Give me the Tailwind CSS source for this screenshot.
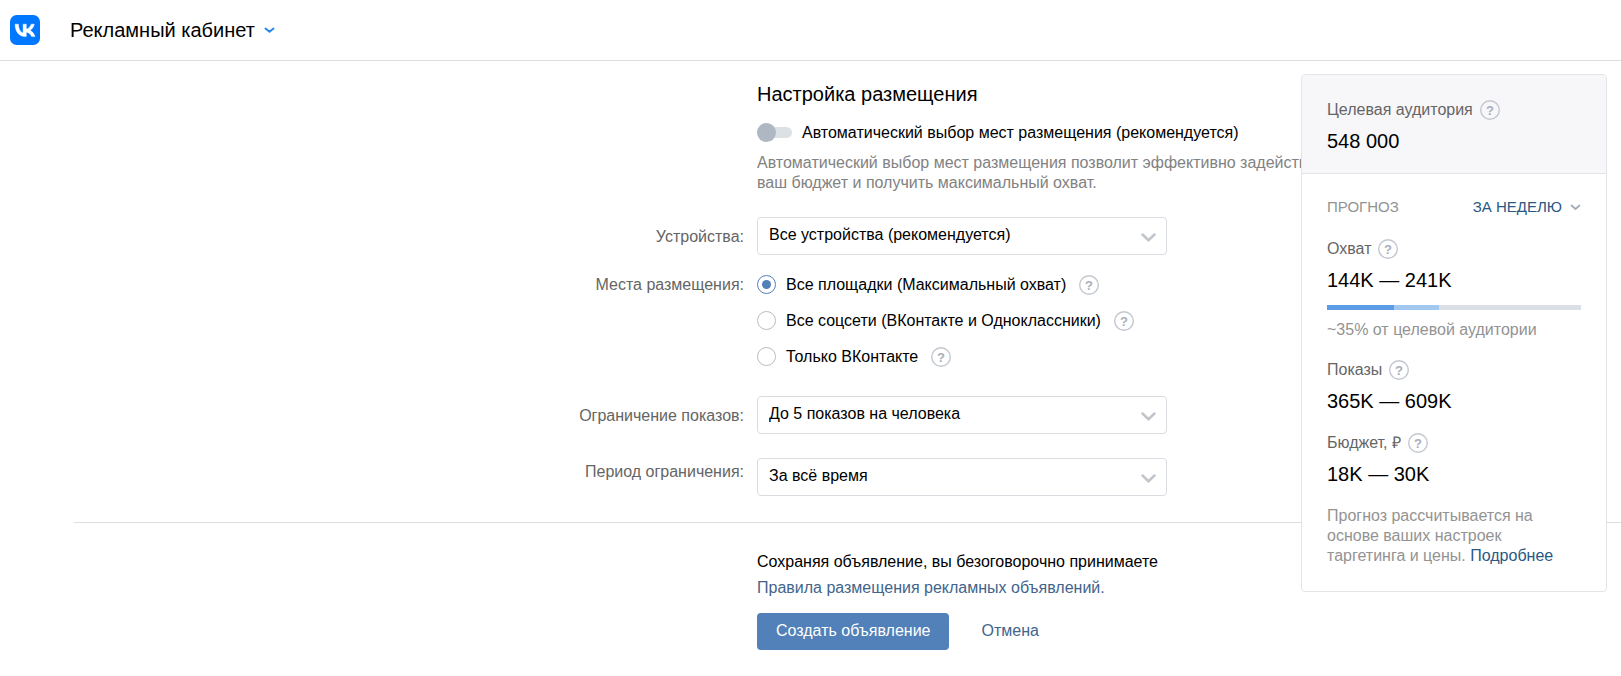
<!DOCTYPE html>
<html lang="ru">
<head>
<meta charset="utf-8">
<meta name="viewport" content="width=device-width, initial-scale=1">
<title>Рекламный кабинет</title>
<script src="https://cdn.jsdelivr.net/npm/@tailwindcss/browser@4"></script>
</head>
<body class="relative min-h-screen overflow-x-hidden bg-white font-['Liberation_Sans',Arial,sans-serif] text-[16px] leading-5 text-black">

<header class="flex h-[61px] items-center border-b border-[#dcdee0] pl-[10px]">
  <a href="#" aria-label="ВКонтакте" class="block size-[30px]">
    <svg class="size-full" viewBox="0 0 24 24" aria-hidden="true">
      <rect width="24" height="24" rx="5.4" fill="#07f"/>
      <path fill="#fff" stroke="#fff" stroke-width=".3" d="M12.77 17.29c-5.47 0-8.59-3.75-8.72-9.99h2.74c.09 4.58 2.11 6.52 3.71 6.92V7.3h2.58v3.95c1.58-.17 3.24-1.97 3.8-3.95h2.58c-.43 2.44-2.23 4.24-3.51 4.98 1.28.6 3.33 2.17 4.11 5.01h-2.84c-.61-1.9-2.13-3.37-4.14-3.57v3.57z"/>
    </svg>
  </a>
  <button type="button" class="ml-[30px] flex items-center gap-[9px] text-[20px] leading-6">
    Рекламный кабинет
    <svg class="h-[7px] w-[11px]" viewBox="0 0 11 7" fill="none" stroke="#2688eb" stroke-width="2" stroke-linecap="round" stroke-linejoin="round" aria-hidden="true"><path d="M1.500 1.500l4 3.200 4-3.200"/></svg>
  </button>
</header>

<form class="ml-[74px]">
  <div class="grid grid-cols-[minmax(0,670px)_minmax(0,1fr)] gap-x-[13px] pt-[21px] pb-[26px]">
    <section class="col-start-2">
      <h1 class="text-[20px] leading-6">Настройка размещения</h1>
      <label class="mt-[17px] flex items-start gap-[10px]">
        <input type="checkbox" role="switch" class="relative mt-1 h-[11px] w-[35px] appearance-none rounded-full bg-[#dce1e6] before:absolute before:-top-1 before:left-0 before:size-[19px] before:rounded-full before:bg-[#aeb7c2]">
        Автоматический выбор мест размещения (рекомендуется)
      </label>
      <p class="mt-[10px] whitespace-nowrap text-[#828282]">Автоматический выбор мест размещения позволит эффективно задействовать<br>ваш бюджет и получить максимальный охват.</p>
    </section>

    <label for="devices" class="mt-6 pt-[10px] text-right text-[#656565]">Устройства:</label>
    <div class="relative mt-6 max-w-[410px]">
      <select id="devices" class="block h-[38px] w-full appearance-none rounded-[4px] border border-[#d9dce0] bg-white pr-10 pb-[3px] pl-[11px]">
        <option>Все устройства (рекомендуется)</option>
      </select>
      <svg class="pointer-events-none absolute top-4 right-[11px] h-[9px] w-[15px]" viewBox="0 0 15 9" fill="none" stroke="#c1c4c8" stroke-width="2.500" stroke-linecap="round" aria-hidden="true"><path d="M1.500 1.500l6 5.700 6-5.700"/></svg>
    </div>

    <div id="places" class="mt-5 text-right text-[#656565]">Места размещения:</div>
    <div role="radiogroup" aria-labelledby="places" class="mt-5 flex flex-col gap-4">
      <div class="flex items-center gap-[13px]">
        <label class="flex items-start gap-[10px]">
          <input type="radio" name="place" checked class="grid size-[19px] appearance-none place-content-center rounded-full border border-[#b8bcc2] before:size-[9px] before:rounded-full checked:border-[#5181b8] checked:before:bg-[#5181b8]">
          Все площадки (Максимальный охват)
        </label>
        <button type="button" aria-label="Подсказка" class="size-5"><svg class="size-5" viewBox="0 0 20 20" aria-hidden="true"><circle cx="10" cy="10" r="9.300" fill="none" stroke="#c3c8d0" stroke-width="1.400"/><text x="10" y="14.500" text-anchor="middle" font-size="13" font-weight="700" fill="#a8aeb8">?</text></svg></button>
      </div>
      <div class="flex items-center gap-[13px]">
        <label class="flex items-start gap-[10px]">
          <input type="radio" name="place" class="grid size-[19px] appearance-none place-content-center rounded-full border border-[#b8bcc2] before:size-[9px] before:rounded-full checked:border-[#5181b8] checked:before:bg-[#5181b8]">
          Все соцсети (ВКонтакте и Одноклассники)
        </label>
        <button type="button" aria-label="Подсказка" class="size-5"><svg class="size-5" viewBox="0 0 20 20" aria-hidden="true"><circle cx="10" cy="10" r="9.300" fill="none" stroke="#c3c8d0" stroke-width="1.400"/><text x="10" y="14.500" text-anchor="middle" font-size="13" font-weight="700" fill="#a8aeb8">?</text></svg></button>
      </div>
      <div class="flex items-center gap-[13px]">
        <label class="flex items-start gap-[10px]">
          <input type="radio" name="place" class="grid size-[19px] appearance-none place-content-center rounded-full border border-[#b8bcc2] before:size-[9px] before:rounded-full checked:border-[#5181b8] checked:before:bg-[#5181b8]">
          Только ВКонтакте
        </label>
        <button type="button" aria-label="Подсказка" class="size-5"><svg class="size-5" viewBox="0 0 20 20" aria-hidden="true"><circle cx="10" cy="10" r="9.300" fill="none" stroke="#c3c8d0" stroke-width="1.400"/><text x="10" y="14.500" text-anchor="middle" font-size="13" font-weight="700" fill="#a8aeb8">?</text></svg></button>
      </div>
    </div>

    <label for="limit" class="mt-[29px] pt-[10px] text-right text-[#656565]">Ограничение показов:</label>
    <div class="relative mt-[29px] max-w-[410px]">
      <select id="limit" class="block h-[38px] w-full appearance-none rounded-[4px] border border-[#d9dce0] bg-white pr-10 pb-[3px] pl-[11px]">
        <option>До 5 показов на человека</option>
      </select>
      <svg class="pointer-events-none absolute top-4 right-[11px] h-[9px] w-[15px]" viewBox="0 0 15 9" fill="none" stroke="#c1c4c8" stroke-width="2.500" stroke-linecap="round" aria-hidden="true"><path d="M1.500 1.500l6 5.700 6-5.700"/></svg>
    </div>

    <label for="period" class="mt-6 pt-1 text-right text-[#656565]">Период ограничения:</label>
    <div class="relative mt-6 max-w-[410px]">
      <select id="period" class="block h-[38px] w-full appearance-none rounded-[4px] border border-[#d9dce0] bg-white pr-10 pb-[3px] pl-[11px]">
        <option>За всё время</option>
      </select>
      <svg class="pointer-events-none absolute top-4 right-[11px] h-[9px] w-[15px]" viewBox="0 0 15 9" fill="none" stroke="#c1c4c8" stroke-width="2.500" stroke-linecap="round" aria-hidden="true"><path d="M1.500 1.500l6 5.700 6-5.700"/></svg>
    </div>
  </div>

  <div class="grid grid-cols-[minmax(0,670px)_minmax(0,1fr)] gap-x-[13px] border-t border-[#dcdee0] pt-[29px]">
    <div class="col-start-2">
      <p>Сохраняя объявление, вы безоговорочно принимаете</p>
      <p class="mt-[6px]"><a href="#" class="text-[#42648b]">Правила размещения рекламных объявлений.</a></p>
      <div class="mt-[15px] flex items-center gap-8">
        <button type="submit" class="h-[37px] rounded-[4px] bg-[#5181b8] px-[19px] pb-[2px] text-white">Создать объявление</button>
        <button type="button" class="pb-[2px] text-[#42648b]">Отмена</button>
      </div>
    </div>
  </div>
</form>

<aside class="absolute top-[74px] right-[14px] w-[306px] overflow-hidden rounded-[4px] border border-[#e3e4e8] bg-white">
  <div class="border-b border-[#e3e4e8] bg-[#f7f7fa] px-[25px] pt-[25px] pb-5">
    <div class="flex items-center gap-[7px] text-[#656565]">
      Целевая аудитория
      <button type="button" aria-label="Подсказка" class="size-5"><svg class="size-5" viewBox="0 0 20 20" aria-hidden="true"><circle cx="10" cy="10" r="9.300" fill="none" stroke="#c3c8d0" stroke-width="1.400"/><text x="10" y="14.500" text-anchor="middle" font-size="13" font-weight="700" fill="#a8aeb8">?</text></svg></button>
    </div>
    <div class="mt-[9px] text-[20px] leading-6">548 000</div>
  </div>
  <div class="px-[25px] pt-[23px] pb-[25px]">
    <div class="flex items-center justify-between text-[15px]">
      <h2 class="text-[#939393]">ПРОГНОЗ</h2>
      <button type="button" class="flex items-center gap-2 text-[#2a5885]">ЗА НЕДЕЛЮ
        <svg class="h-[7px] w-[11px]" viewBox="0 0 11 7" fill="none" stroke="#a5acb8" stroke-width="1.700" stroke-linecap="round" stroke-linejoin="round" aria-hidden="true"><path d="M1.500 1.500l4 3.500 4-3.500"/></svg>
      </button>
    </div>
    <div class="mt-[22px] flex items-center gap-[7px] text-[#656565]">
      Охват
      <button type="button" aria-label="Подсказка" class="size-5"><svg class="size-5" viewBox="0 0 20 20" aria-hidden="true"><circle cx="10" cy="10" r="9.300" fill="none" stroke="#c3c8d0" stroke-width="1.400"/><text x="10" y="14.500" text-anchor="middle" font-size="13" font-weight="700" fill="#a8aeb8">?</text></svg></button>
    </div>
    <div class="mt-[9px] text-[20px] leading-6">144K — 241K</div>
    <div class="mt-[13px] flex h-[5px] bg-[#dae0e5]">
      <div class="bg-[#5c9ce6]" style="width:26.3%"></div>
      <div class="bg-[#a3c8f0]" style="width:17.6%"></div>
    </div>
    <p class="mt-[10px] text-[#939393]">~35% от целевой аудитории</p>
    <div class="mt-5 flex items-center gap-[7px] text-[#656565]">
      Показы
      <button type="button" aria-label="Подсказка" class="size-5"><svg class="size-5" viewBox="0 0 20 20" aria-hidden="true"><circle cx="10" cy="10" r="9.300" fill="none" stroke="#c3c8d0" stroke-width="1.400"/><text x="10" y="14.500" text-anchor="middle" font-size="13" font-weight="700" fill="#a8aeb8">?</text></svg></button>
    </div>
    <div class="mt-[9px] text-[20px] leading-6">365K — 609K</div>
    <div class="mt-5 flex items-center gap-[7px] text-[#656565]">
      Бюджет, ₽
      <button type="button" aria-label="Подсказка" class="size-5"><svg class="size-5" viewBox="0 0 20 20" aria-hidden="true"><circle cx="10" cy="10" r="9.300" fill="none" stroke="#c3c8d0" stroke-width="1.400"/><text x="10" y="14.500" text-anchor="middle" font-size="13" font-weight="700" fill="#a8aeb8">?</text></svg></button>
    </div>
    <div class="mt-[9px] text-[20px] leading-6">18K — 30K</div>
    <p class="mt-5 text-[#939393]">Прогноз рассчитывается на основе ваших настроек таргетинга и цены. <a href="#" class="text-[#2a5885]">Подробнее</a></p>
  </div>
</aside>

</body>
</html>
